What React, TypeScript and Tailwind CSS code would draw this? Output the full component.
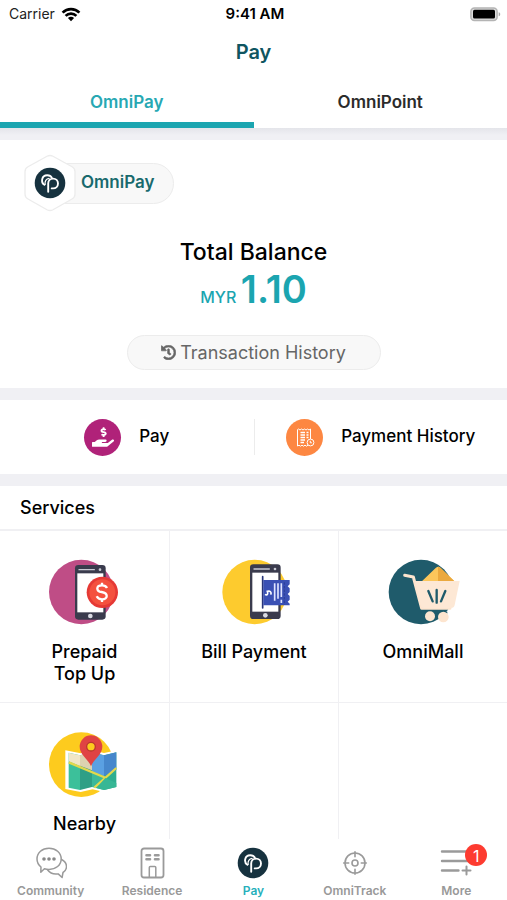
import type { ReactNode } from "react";
import { FaHandHoldingUsd, FaHistory } from "react-icons/fa";

function OmniLogo({ className }: { className: string }) {
  return (
    <svg viewBox="0 0 32 32" className={className} aria-hidden="true">
      <circle cx="16" cy="16" r="15.3" fill="#16323f" />
      <g fill="none" stroke="#fff" strokeWidth="1.900" strokeLinecap="round">
        <path d="M10.400 17.700C6.600 15.400 7.500 8.200 13.200 8.200c2.300 0 3.800.8 4.600 2.400" />
        <path d="M14.200 24.800v-8.300a4.900 4.900 0 1 1 4.900 4.900h-1.400" />
        <path d="M11.200 17.400c-.7-3.200 1-5.600 3.900-6" strokeWidth="1.200" />
      </g>
    </svg>
  );
}

function WifiIcon() {
  return (
    <svg viewBox="0 0 20 15" className="h-[15px] w-5" aria-hidden="true">
      <g fill="none" stroke="#000" strokeWidth="2.700">
        <path d="M1.600 5.600c4.700-4.700 12.100-4.700 16.800 0" />
        <path d="M4.600 8.900c3-3 7.800-3 10.800 0" />
      </g>
      <path d="M10 14.200 6.900 11c1.800-1.600 4.400-1.600 6.200 0z" fill="#000" />
    </svg>
  );
}

function BatteryIcon() {
  return (
    <svg viewBox="0 0 31 15" className="h-[15px] w-[31px]" aria-hidden="true">
      <rect x=".9" y=".9" width="26.200" height="12.600" rx="3.500" fill="#ddd" stroke="#b4b4b4" strokeWidth="1.500" />
      <rect x="3" y="2.800" width="22" height="8.800" rx="1.500" fill="#000" />
      <path d="M28.700 5.200c2 .6 2 3.400 0 4z" fill="#a9a9a9" />
    </svg>
  );
}

function Phone({ x, y }: { x: number; y: number }) {
  return (
    <g transform={`translate(${x} ${y})`}>
      <rect width="92" height="164" rx="10" fill="#3a3b4d" />
      <rect x="7" y="25" width="78" height="117" fill="#fff" />
      <path d="M12 14h46" stroke="#c9cad4" strokeWidth="4" strokeLinecap="round" />
      <circle cx="75" cy="14" r="4" fill="#c9cad4" />
      <circle cx="46" cy="153" r="7" fill="#d9dae2" />
    </g>
  );
}

const iconSize = "size-[72px]";

function PrepaidIcon() {
  return (
    <svg viewBox="55 36 216 216" className={iconSize} aria-hidden="true">
      <circle cx="152" cy="141" r="97" fill="#bf4d86" />
      <Phone x={133} y={60} />
      <circle cx="215" cy="142" r="47" fill="#e53935" />
      <circle cx="215" cy="142" r="39" fill="#f4513f" />
      <g fill="none" stroke="#fff" strokeWidth="7">
        <path d="M229 129c-3-6-8-8-15-8-19 0-18 18-1 20 20 3 20 22 1 22-8 0-13-3-16-9" />
        <path d="M214 113v9M214 162v9" />
      </g>
    </svg>
  );
}

function BillIcon() {
  return (
    <svg viewBox="52 36 216 216" className={iconSize} aria-hidden="true">
      <circle cx="162" cy="141" r="97" fill="#fdcb2e" />
      <Phone x={148} y={58} />
      <path d="M186 95v94" stroke="#273478" strokeWidth="5" strokeLinecap="round" />
      <path d="M188 105h79v13l-6 6 6 6v11l-6 6 6 6v11l-6 6 6 6v5h-79z" fill="#3a50b4" />
      <path d="M193 148c7 5 10-2 7-9 8-3 14 3 10 10" fill="none" stroke="#fff" strokeWidth="5" />
      <path d="M222 115v52M232 115v46M242 115v41M242 164v10" stroke="#dfe4ff" strokeWidth="5" />
      <path d="M251 112v67" stroke="#2c3e96" strokeWidth="3" strokeDasharray="7 4" />
    </svg>
  );
}

function MallIcon() {
  return (
    <svg viewBox="52 36 216 216" className={iconSize} overflow="visible" aria-hidden="true">
      <circle cx="154" cy="141" r="97" fill="#1f5b6b" />
      <path d="m155 110 43-41c6-5 10-5 15 0l43 41z" fill="#fbc65b" />
      <path d="m205 65c3 0 5 1 8 4l43 41h-51z" fill="#eba93e" />
      <path d="M105 91l26 5 25 94h85" fill="none" stroke="#fde5cf" strokeWidth="9" strokeLinecap="round" strokeLinejoin="round" />
      <path d="M136 108h134l-15 72c-1 6-5 9-11 9h-80c-6 0-9-3-11-9z" fill="#fde8d5" />
      <path d="m176 138 13 31M201 135v38M227 138l-13 31" stroke="#1f5b6b" strokeWidth="7" strokeLinecap="round" />
      <path d="M171 203h62" stroke="#1f5b6b" strokeWidth="6" />
      <circle cx="181" cy="214" r="15" fill="#fde5cf" />
      <circle cx="221" cy="216" r="16" fill="#fde5cf" />
    </svg>
  );
}

function NearbyIcon() {
  return (
    <svg viewBox="55 42 216 216" className={iconSize} aria-hidden="true">
      <circle cx="152" cy="149" r="97" fill="#fdcb1e" />
      <path d="m104 106 46 9 36-9 34 8 43-9v118l-43 8-34-8-36 8-46-9z" fill="#fff" />
      <path d="m114 113 34 8v104l-34-7z" fill="#3cc09a" />
      <path d="m148 121 36-9v104l-36 9z" fill="#2f9f86" />
      <path d="m184 112 36 9v104l-36-9z" fill="#3cb99a" />
      <path d="m220 121 37-9v104l-37 9z" fill="#2fae90" />
      <path d="m114 113 34 8v32l-34-14z" fill="#f1e6c6" />
      <path d="m148 121 36-9v54l-36-14z" fill="#ddd2b0" />
      <path d="m184 112 36 9v62l-36-15z" fill="#5aa0e2" />
      <path d="m220 121 37-9v53l-37 18z" fill="#4687cc" />
      <path d="m114 142 112 47M257 159l-66 59" stroke="#e3d84c" strokeWidth="7" />
      <path d="m224 189 33 15v12l-37 9-23-6z" fill="#37b795" />
      <path d="M181 154c-9-23-34-35-34-59a34 34 0 0 1 68 0c0 24-25 36-34 59z" fill="#e04343" />
      <circle cx="181" cy="95" r="13" fill="#fdcb1e" stroke="#b9372f" strokeWidth="4" />
    </svg>
  );
}

function ReceiptIcon() {
  return (
    <svg viewBox="0 0 37 37" className="size-[37px]" aria-hidden="true">
      <circle cx="18.500" cy="18.500" r="18.500" fill="#fd8742" />
      <g fill="none" stroke="#fff" strokeWidth="1">
        <path d="M24.500 20v-10l-1.500 1-1.500-1-1.500 1-1.500-1-1.500 1-1.500-1-1.500 1-1.500-1-1 .6V27l1.500-.8 1.500 1 1.500-1 1.500 1 1.500-1 1.500 1 1.500-1" />
        <path d="M14.500 13.500h4.500M14.500 16h4.500M14.500 18.500h4.500M14.500 21h4.500M14.500 23.500h3.500" strokeWidth="1.500" />
        <path d="M20.500 13.500h2M20.500 16h2M20.500 18.500h2" strokeWidth="1.300" />
        <circle cx="24.500" cy="23.500" r="3.400" />
        <path d="M24.300 21.800v2h1.600" />
      </g>
    </svg>
  );
}

function CommunityIcon() {
  return (
    <svg viewBox="0 0 32 32" className="size-8" fill="none" stroke="#9a9a9a" strokeWidth="1.500" strokeLinecap="round" strokeLinejoin="round" aria-hidden="true">
      <path d="M14 1.200C7.200 1.200 2 5.800 2 12c0 3.200 1.500 6 4 8l-.2 5.200 3.600-3.400c1.500.4 2.900.6 4.600.6 6.700 0 12.200-4.200 12.200-10.400S20.700 1.200 14 1.200z" />
      <path d="M26.600 12.500c2.900 1.500 4.900 4 4.900 7 0 2.400-1.300 4.600-3.500 6l-.9 5-3.900-3.600c-4.300.7-8.200-.6-10.700-4.100" />
      <g fill="#888" stroke="none">
        <circle cx="9" cy="12" r="1.800" />
        <circle cx="14" cy="12" r="1.800" />
        <circle cx="19" cy="12" r="1.800" />
      </g>
    </svg>
  );
}

function ResidenceIcon() {
  return (
    <svg viewBox="0 0 32 32" className="size-8" fill="none" stroke="#9a9a9a" strokeWidth="1.800" aria-hidden="true">
      <rect x="5.500" y="1.500" width="22" height="29" rx="2.500" />
      <path d="M13.300 30v-9.500c0-.7.300-1 1-1h4.500c.7 0 1 .3 1 1V30" strokeWidth="1.500" />
      <path d="M10.500 8.300h3.500M19 8.300h3.500M10.500 12.300h3.500M19 12.300h3.500" strokeWidth="2.600" strokeLinecap="round" />
    </svg>
  );
}

function TrackIcon() {
  return (
    <svg viewBox="0 0 32 32" className="size-8" fill="none" stroke="#9a9a9a" strokeWidth="1.600" strokeLinecap="round" aria-hidden="true">
      <circle cx="16" cy="16" r="10" />
      <circle cx="16" cy="16" r="3" />
      <path d="M16 4.700v5M16 22.300v5M4.700 16h5M22.300 16h5" />
    </svg>
  );
}

function MoreIcon() {
  return (
    <svg viewBox="0 0 32 32" className="size-8" fill="none" stroke="#9a9a9a" strokeWidth="2.400" strokeLinecap="round" aria-hidden="true">
      <path d="M2 4.500h27M2 14h27M2 23.500h16.500" />
      <path d="M26.500 19.500v8M22.500 23.500h8" strokeWidth="2" />
    </svg>
  );
}

type Service = { label: string; icon: ReactNode };

const services: Service[] = [
  { label: "Prepaid Top Up", icon: <PrepaidIcon /> },
  { label: "Bill Payment", icon: <BillIcon /> },
  { label: "OmniMall", icon: <MallIcon /> },
  { label: "Nearby", icon: <NearbyIcon /> },
];

type NavItem = { label: string; icon: ReactNode; active?: boolean; badge?: number };

const navItems: NavItem[] = [
  { label: "Community", icon: <CommunityIcon /> },
  { label: "Residence", icon: <ResidenceIcon /> },
  { label: "Pay", icon: <OmniLogo className="size-8" />, active: true },
  { label: "OmniTrack", icon: <TrackIcon /> },
  { label: "More", icon: <MoreIcon />, badge: 1 },
];

const cell = "min-h-[172px] border-b border-l border-[#f0f0f3] nth-[3n+1]:border-l-0";

export default function App() {
  return (
    <div className="flex h-screen flex-col bg-white font-['Inter',sans-serif] text-black">
      <header className="shrink-0">
        <div className="grid h-7 grid-cols-3 items-center pl-[9px] pr-1.5">
          <div className="flex items-center gap-1.5 text-sm text-[#222]">
            Carrier <WifiIcon />
          </div>
          <div className="text-center text-[15px] font-semibold">9:41 AM</div>
          <div className="flex justify-end"><BatteryIcon /></div>
        </div>
        <h1 className="flex h-12 items-center justify-center text-xl font-semibold text-[#0f5561]">Pay</h1>
        <div role="tablist" className="grid h-[52px] grid-cols-2 text-[17px] font-semibold">
          <button role="tab" aria-selected="true" className="border-b-6 border-[#1ba5b0] pt-2 text-[#27a8b3]">
            OmniPay
          </button>
          <button role="tab" aria-selected="false" className="border-b-6 border-transparent pt-2 text-[#2b2b2b]">
            OmniPoint
          </button>
        </div>
      </header>

      <main className="flex min-h-0 flex-1 flex-col gap-3 overflow-y-auto bg-[#f0f0f4] bg-linear-to-b from-[#e4e5ea] to-[#f0f0f4] to-1% pt-3 [scrollbar-width:none]">
        <section className="flex h-[248px] shrink-0 flex-col bg-white px-6 pt-3.5 pb-[18px]">
          <div className="flex items-center">
            <div className="relative z-10 grid h-[58px] w-[52px] place-items-center">
              <svg viewBox="0 0 52 58" className="absolute inset-0 size-full" aria-hidden="true">
                <path d="M23 2.300q3-1.600 6 0l19 10.500q3 1.700 3 5V40q0 3.300-3 5L29 55.700q-3 1.600-6 0L4 45q-3-1.700-3-5V17.800q0-3.300 3-5z" fill="#fff" stroke="#ececec" strokeWidth="1.300" />
              </svg>
              <OmniLogo className="relative size-8" />
            </div>
            <div className="-ml-5 flex h-[41px] items-center rounded-r-full border border-[#ececec] bg-[#f8f8f8] pr-[18px] pl-6 text-[17px] font-semibold text-[#186a6d]">
              OmniPay
            </div>
          </div>
          <div className="mt-6 text-center">
            <h2 className="text-[23px] leading-8 font-medium">Total Balance</h2>
            <p className="leading-[42px] text-[#1ba5b0]">
              <span className="text-base font-medium">MYR</span>{" "}
              <span className="text-[38px] leading-[42px] font-semibold">1.10</span>
            </p>
          </div>
          <button className="mx-auto mt-auto flex h-[35px] w-[254px] items-center justify-center gap-1 rounded-full border border-[#ececec] bg-[#f8f8f8] text-lg text-[#666]">
            <FaHistory className="size-[15px]" stroke="currentColor" strokeWidth="20" aria-hidden="true" />
            Transaction History
          </button>
        </section>

        <section className="grid h-[74px] shrink-0 grid-cols-2 items-center bg-white">
          <button className="flex h-9 items-center justify-center gap-[18px] text-[17px] font-medium">
            <span className="grid size-[37px] place-items-center rounded-full bg-[#b02279]">
              <FaHandHoldingUsd className="size-[22px] text-white" aria-hidden="true" />
            </span>
            Pay
          </button>
          <button className="flex h-9 items-center justify-center gap-[18px] border-l border-[#ececec] text-[17px] font-medium">
            <ReceiptIcon />
            Payment History
          </button>
        </section>

        <section className="shrink-0 bg-white">
          <h2 className="flex h-[45px] items-center border-b-2 border-[#f0f0f3] px-5 text-lg font-medium">Services</h2>
          <div className="grid grid-cols-3">
            {services.map((service) => (
              <button key={service.label} className={`${cell} flex flex-col items-center gap-3 px-2 pt-[26px] pb-4 text-lg leading-[22px] font-medium`}>
                {service.icon}
                <span className={service.label.length > 12 ? "w-20" : ""}>{service.label}</span>
              </button>
            ))}
            <div className={cell} />
            <div className={cell} />
          </div>
        </section>
      </main>

      <nav className="grid h-[61px] shrink-0 grid-cols-5 bg-white pt-2">
        {navItems.map((item) => (
          <a key={item.label} href="#" className="flex flex-col items-center gap-1">
            <span className="relative">
              {item.icon}
              {item.badge && (
                <span className="absolute -top-[3px] left-[25px] grid size-[22px] place-items-center rounded-full bg-[#fd3b30] text-base text-white">
                  {item.badge}
                </span>
              )}
            </span>
            <span className={`text-xs leading-4 font-semibold ${item.active ? "text-[#27b0bb]" : "text-[#999]"}`}>
              {item.label}
            </span>
          </a>
        ))}
      </nav>
    </div>
  );
}
